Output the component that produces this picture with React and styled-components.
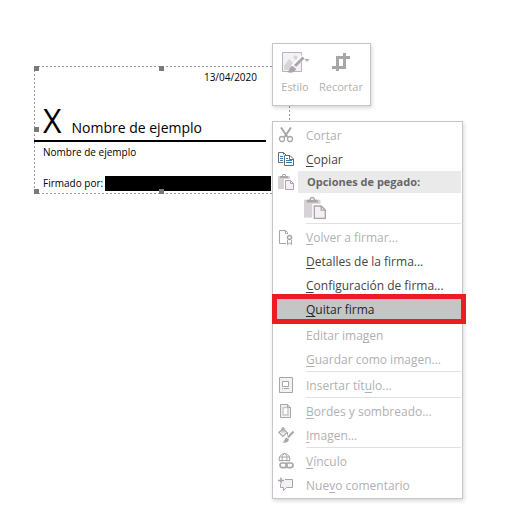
import React from 'react';
import styled, { createGlobalStyle } from 'styled-components';

const GlobalStyle = createGlobalStyle`
  * {
    box-sizing: border-box;
  }
  body {
    margin: 0;
    background: #ffffff;
    font-family: "Open Sans", "Noto Sans", sans-serif;
    font-size: 12px;
  }
`

const Page = styled.main`
  position: relative;
  min-height: 100vh;
  padding: 66px 34px;
`

///////////////////////////////////////////////////////////////////
// Signature line
///////////////////////////////////////////////////////////////////

const dashes = (angle) => `repeating-linear-gradient(${angle}, #9a9a9a 0 2px, transparent 2px 4px)`;

const Signature = styled.section`
  position: relative;
  display: flex;
  flex-direction: column;
  max-width: 256px;
  padding: 4px 0 3px;
  color: #000000;
  background:
    ${dashes('90deg')} top / 100% 1px no-repeat,
    ${dashes('90deg')} bottom / 100% 1px no-repeat,
    ${dashes('180deg')} left / 1px 100% no-repeat,
    ${dashes('180deg')} right / 1px 100% no-repeat;
`

const Handle = styled.span`
  position: absolute;
  top: ${props => props.$top};
  left: ${props => props.$left};
  width: 5px;
  height: 5px;
  background: #7a7a7a;
`

const SignDate = styled.time`
  align-self: flex-end;
  margin-right: 33px;
  font-size: 10px;
  line-height: 14px;
`

const SignRow = styled.div`
  display: flex;
  align-items: baseline;
  gap: 10px;
  height: 58px;
  margin-right: 24px;
  padding: 17px 0 0 9px;
  border-bottom: 2px solid #000000;
`

const SignMark = styled.span`
  font-size: 32px;
  line-height: 40px;
`

const SignName = styled.span`
  font-size: 14px;
  line-height: 20px;
`

const SignText = styled.p`
  display: flex;
  align-items: center;
  gap: 2px;
  margin: 0;
  padding-left: 9px;
  font-size: 10px;
  line-height: 20px;
`

const SignedBy = styled(SignText)`
  margin-top: 13px;
  line-height: 16px;
`

const Redacted = styled.span`
  width: 166px;
  height: 15px;
  background: #000000;
`

///////////////////////////////////////////////////////////////////
// Mini toolbar
///////////////////////////////////////////////////////////////////

const Floating = styled.div`
  position: absolute;
  left: 272px;
  background: #ffffff;
  border: 1px solid #c6c6c6;
  box-shadow: 1px 2px 4px rgba(0, 0, 0, 0.16);
`

const MiniToolbar = styled(Floating)`
  top: 43px;
  display: flex;
  gap: 9px;
  padding: 6px 7px 9px;
`

const ToolButton = styled.button`
  display: flex;
  flex-direction: column;
  align-items: center;
  gap: 4px;
  padding: 0;
  border: 0;
  background: transparent;
  color: #b1b1b1;
  font: inherit;
  font-size: 11px;
  line-height: 18px;
`

///////////////////////////////////////////////////////////////////
// Context menu
///////////////////////////////////////////////////////////////////

const Menu = styled(Floating)`
  top: 121px;
  width: 191px;
  padding: 1px 0;
`

const Item = styled.button`
  position: relative;
  display: grid;
  grid-template-columns: 25px 1fr;
  gap: 8px;
  align-items: center;
  width: 100%;
  height: 24px;
  margin-bottom: ${props => props.$marked ? '2px' : '0'};
  padding: 0;
  border: 0;
  background: ${props => props.$marked ? '#c5c5c5' : 'transparent'};
  color: ${props => props.$marked ? '#262626' : '#444444'};
  font: inherit;
  text-align: left;
  white-space: nowrap;

  &:disabled {
    color: #b1b1b1;
  }

  u {
    text-underline-offset: 2px;
    text-decoration-skip-ink: none;
  }
`

const Ring = styled.span`
  position: absolute;
  inset: -3px -4px -3px -1px;
  border: 5px solid #ed1c24;
`

const IconSlot = styled.span`
  display: flex;
  justify-content: center;
`

const Heading = styled.div`
  display: grid;
  grid-template-columns: 25px 1fr;
  align-items: center;
  height: 22px;
  margin-right: 1px;
  color: #666666;
  font-size: 11px;
  font-weight: 700;

  & > :last-child {
    padding-left: 9px;
    line-height: 22px;
    background: #eaeaea;
  }
`

const PasteButton = styled.button`
  display: block;
  margin: 0 0 0 30px;
  padding: 4px 1px;
  border: 0;
  background: transparent;
  line-height: 0;
`

const Separator = styled.hr`
  height: 2px;
  margin: 0 1px 0 33px;
  border: 0;
  border-top: 1px solid #e1e1e1;
`

const Svg = ({ w = 16, h = 16, children, ...rest }) => (
  <svg width={w} height={h} viewBox={`0 0 ${w} ${h}`} fill="none" stroke="#a9a5a9" aria-hidden="true" {...rest}>
    {children}
  </svg>
);

const ScissorsIcon = () => (
  <Svg>
    <path d="M3 0.5L9.5 10M13 0.5L6.500 10" strokeWidth="2" />
    <circle cx="4" cy="12" r="2.500" strokeWidth="1.300" />
    <circle cx="12" cy="12" r="2.500" strokeWidth="1.300" />
  </Svg>
);

const CopyIcon = () => (
  <Svg stroke="#6b6b6b">
    <path d="M5.500 11.500H0.500V1.500H5.500L8.500 4.500M5.500 1.500V3.500" />
    <path d="M6.500 4.500H12L15.500 8V14.500H6.500Z" fill="#fff" />
    <path d="M11.500 4.500V8.500H15.500" />
    <path d="M2 5.500H5M2 7.500H5M2 9.500H5M8 7.500H10M8 9.500H14M8 11.500H14" stroke="#3c7db5" />
  </Svg>
);

const PasteIcon = ({ size = 16 }) => (
  <svg width={size} height={size} viewBox="0 0 16 16" fill="none" stroke="#a9a5a9" aria-hidden="true">
    <path d="M0 2H12V15H0Z" fill="#d6d2d6" stroke="none" />
    <path d="M2 4V2H4V1L5 0H7L8 1V2H10V4Z" fill="#a9a5a9" stroke="none" />
    <path d="M5 1H7V2H5Z" fill="#fff" stroke="none" />
    <path d="M6 5H16V16H6Z" fill="#fff" stroke="none" />
    <path d="M7.500 6.500H12.500L15.500 9.500V15.500H7.500Z" fill="#f4f0f6" />
    <path d="M12.500 6.500V9.500H15.500" />
  </svg>
);

const SignDocIcon = () => (
  <Svg>
    <path d="M8 14.500H1.500V1.500H7.500L9.500 3.500V5" />
    <path d="M7.500 1.500V4.500H9.500" />
    <circle cx="11.500" cy="8.500" r="2" strokeWidth="1.500" />
    <path d="M9.500 11V15.500L11.500 14L13.500 15.500V11" />
  </Svg>
);

const CaptionIcon = () => (
  <Svg>
    <path d="M1.500 0.500H14.500V15.500H1.500Z" fill="#f4f0f6" />
    <path d="M4.500 4.500H10.500V9.500H4.500Z" fill="#fff" />
    <path d="M4 11.500H5M6 11.500H11" />
  </Svg>
);

const BordersIcon = () => (
  <Svg>
    <path d="M2.500 1.500H9.500L12.500 4.500V14.500H2.500Z" fill="#f4f0f6" />
    <path d="M5 4.500H10V12H5Z" fill="#fff" stroke="#cbc6cb" strokeWidth="1.500" />
    <path d="M9.500 1.500V4.500H12.500" />
  </Svg>
);

const FormatIcon = () => (
  <Svg>
    <path d="M0.800 5.500L5 1.800L9 5.500L5 9.500Z" fill="#f4f0f6" strokeWidth="1.200" />
    <path d="M4 5.500V0.800H6V5.500M9.500 5.500V8.500" />
    <path d="M15.500 4.500L10 10.500" strokeWidth="2" />
    <path d="M4.500 15.500C7 14.500 6 11.500 8.500 10.500L11 12.500C10.500 15 7.500 16.500 4.500 15.500Z" fill="#a9a5a9" stroke="none" />
  </Svg>
);

const LinkIcon = () => (
  <Svg>
    <circle cx="6.500" cy="6" r="5.300" />
    <ellipse cx="6.500" cy="6" rx="2.500" ry="5.300" />
    <path d="M1.500 4H11.500M1.500 7.500H11.500" />
    <path d="M1 8.500H16V16H1Z" fill="#fff" stroke="none" />
    <rect x="2" y="10" width="7" height="4.600" rx="2.300" strokeWidth="1.700" />
    <rect x="8" y="10" width="7" height="4.600" rx="2.300" strokeWidth="1.700" />
  </Svg>
);

const CommentIcon = () => (
  <Svg>
    <path d="M7 2.500H14.500V10.500H8.500L5.500 13.500V10.500H2.500V7" fill="#f4f0f6" />
    <path d="M0 3.500H6M3 0.500V6.500" strokeWidth="1.500" />
  </Svg>
);

const StyleIcon = () => (
  <Svg w={30} h={24}>
    <path d="M2.500 2.500H21.500V21.500H2.500Z" fill="#f4f0f6" stroke="#b8b3b8" />
    <path d="M4 16L9 9L16 16V20H4Z" fill="#d8d3d8" stroke="none" />
    <circle cx="15.500" cy="7.500" r="2" fill="#d8d3d8" stroke="none" />
    <path d="M23 7L13 17" stroke="#fff" strokeWidth="5" />
    <path d="M23.500 7.500L15 16" strokeWidth="3" />
    <path d="M7 22C10 21 9 17 13 16L16 19C15 22 11 24 7 22Z" fill="#a9a5a9" stroke="none" />
    <path d="M24.500 9H29.500L27 12Z" fill="#b1adb1" stroke="none" />
  </Svg>
);

const CropIcon = () => (
  <Svg w={24} h={24} strokeWidth="3">
    <path d="M3 17.500H15.500V3M8.500 21V7.500H21" />
  </Svg>
);

// Draws the accelerator letter, written as "_x" in the label, underlined
const label = (text) => {
  const at = text.indexOf('_');
  if (at < 0) {
    return text;
  }
  return <>{text.slice(0, at)}<u>{text[at + 1]}</u>{text.slice(at + 2)}</>;
};

const MenuItem = ({ icon, text, disabled, marked }) => (
  <Item type="button" role="menuitem" disabled={disabled} $marked={marked}>
    <IconSlot>{icon}</IconSlot>
    <span>{label(text)}</span>
    {marked && <Ring />}
  </Item>
);

const handles = [
  ['0', '0'], ['0', '125px'],
  ['61px', '0'],
  ['calc(100% - 5px)', '0'], ['calc(100% - 5px)', '125px'],
];

export default function App() {
  return (
    <Page>
      <GlobalStyle />
      <Signature>
        <SignDate>13/04/2020</SignDate>
        <SignRow>
          <SignMark>X</SignMark>
          <SignName>Nombre de ejemplo</SignName>
        </SignRow>
        <SignText>Nombre de ejemplo</SignText>
        {handles.map(([top, left]) => <Handle key={top + left} $top={top} $left={left} />)}
        <SignedBy>Firmado por: <Redacted /></SignedBy>
      </Signature>

      <MiniToolbar role="toolbar">
        <ToolButton type="button"><StyleIcon />Estilo</ToolButton>
        <ToolButton type="button"><CropIcon />Recortar</ToolButton>
      </MiniToolbar>

      <Menu role="menu">
        <MenuItem icon={<ScissorsIcon />} text="Cor_tar" disabled />
        <MenuItem icon={<CopyIcon />} text="_Copiar" />
        <Heading>
          <IconSlot><PasteIcon /></IconSlot>
          <span>Opciones de pegado:</span>
        </Heading>
        <PasteButton type="button" role="menuitem" aria-label="Pegar" disabled><PasteIcon size={22} /></PasteButton>
        <Separator />
        <MenuItem icon={<SignDocIcon />} text="_Volver a firmar..." disabled />
        <MenuItem text="_Detalles de la firma..." />
        <MenuItem text="_Configuración de firma..." />
        <MenuItem text="_Quitar firma" marked />
        <MenuItem text="Editar ima_gen" disabled />
        <MenuItem text="_Guardar como imagen..." disabled />
        <Separator />
        <MenuItem icon={<CaptionIcon />} text="Insertar tít_ulo..." disabled />
        <Separator />
        <MenuItem icon={<BordersIcon />} text="_Bordes y sombreado..." disabled />
        <MenuItem icon={<FormatIcon />} text="_Imagen..." disabled />
        <Separator />
        <MenuItem icon={<LinkIcon />} text="_Vínculo" disabled />
        <MenuItem icon={<CommentIcon />} text="Nue_vo comentario" disabled />
      </Menu>
    </Page>
  );
}
